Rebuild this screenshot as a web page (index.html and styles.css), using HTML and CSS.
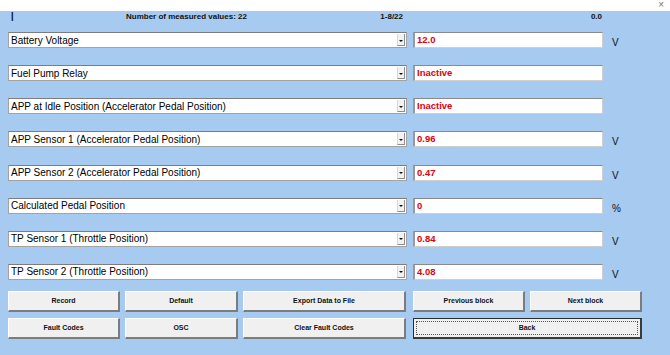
FILE: index.html
```html
<!DOCTYPE html>
<html>
<head>
<meta charset="UTF-8" />
<title>Measured values</title>
<link rel="stylesheet" href="styles.css">
</head>
<body>
<div class="titlebar"><span class="close">&#215;</span></div>

<div class="panel">
	<div class="head">
		<div class="head-left">
			<span class="pipe">|</span>
			<span class="count">Number of measured values: 22</span>
			<span class="page">1-8/22</span>
		</div>
		<div class="head-val">0.0</div>
	</div>

	<div class="rows">
		<div class="row">
			<div class="select"><span class="label">Battery Voltage</span><span class="arrow"><i></i></span></div>
			<div class="value">12.0</div>
			<div class="unit">V</div>
		</div>
		<div class="row">
			<div class="select"><span class="label">Fuel Pump Relay</span><span class="arrow"><i></i></span></div>
			<div class="value">Inactive</div>
			<div class="unit"></div>
		</div>
		<div class="row">
			<div class="select"><span class="label">APP at Idle Position (Accelerator Pedal Position)</span><span class="arrow"><i></i></span></div>
			<div class="value">Inactive</div>
			<div class="unit"></div>
		</div>
		<div class="row">
			<div class="select"><span class="label">APP Sensor 1 (Accelerator Pedal Position)</span><span class="arrow"><i></i></span></div>
			<div class="value">0.96</div>
			<div class="unit">V</div>
		</div>
		<div class="row">
			<div class="select"><span class="label">APP Sensor 2 (Accelerator Pedal Position)</span><span class="arrow"><i></i></span></div>
			<div class="value">0.47</div>
			<div class="unit">V</div>
		</div>
		<div class="row">
			<div class="select"><span class="label">Calculated Pedal Position</span><span class="arrow"><i></i></span></div>
			<div class="value">0</div>
			<div class="unit">%</div>
		</div>
		<div class="row">
			<div class="select"><span class="label">TP Sensor 1 (Throttle Position)</span><span class="arrow"><i></i></span></div>
			<div class="value">0.84</div>
			<div class="unit">V</div>
		</div>
		<div class="row">
			<div class="select"><span class="label">TP Sensor 2 (Throttle Position)</span><span class="arrow"><i></i></span></div>
			<div class="value">4.08</div>
			<div class="unit">V</div>
		</div>
	</div>

	<div class="buttons">
		<div class="btn">Record</div>
		<div class="btn">Default</div>
		<div class="btn">Export Data to File</div>
		<div class="btn push">Previous block</div>
		<div class="btn">Next block</div>
		<div class="btn">Fault Codes</div>
		<div class="btn">OSC</div>
		<div class="btn">Clear Fault Codes</div>
		<div class="btn push back"><span class="focus">Back</span></div>
	</div>
</div>
</body>
</html>
```

FILE: styles.css
```css
body {
	margin: 0;
	background-color: #a6caf0;
	font-family: "Liberation Sans", Arial, sans-serif;
	color: #000;
}

.titlebar {
	height: 11px;
	background-color: white;
	display: flex;
	justify-content: flex-end;
}

.close {
	font-size: 10px;
	line-height: 9px;
	color: #777;
	padding-right: 6px;
}

.panel {
	padding-left: 8px;
}

/* header line */
.head {
	height: 21px;
	display: grid;
	grid-template-columns: 399px 190px;
	column-gap: 6px;
	font-size: 8px;
	font-weight: bold;
	line-height: 11px;
	color: #111;
}

.head-left {
	display: flex;
}

.pipe {
	width: 115px;
	padding-left: 3px;
	font-size: 9px;
	color: #000;
}

.page {
	margin-left: auto;
	padding-right: 4px;
}

.head-val {
	text-align: right;
	padding-right: 1px;
}

/* measured value rows */
.rows {
	display: grid;
	row-gap: 17.15px;
}

.row {
	display: grid;
	grid-template-columns: 399px 190px auto;
	column-gap: 6px;
	height: 16px;
}

.select {
	display: flex;
	align-items: center;
	background: white;
	border: 1px solid #a3a3a3;
	border-top-color: #7d7d7d;
	box-sizing: border-box;
	height: 16px;
}

.label {
	flex: 1;
	font-size: 10px;
	padding-left: 2px;
	white-space: nowrap;
}

.arrow {
	width: 8px;
	height: 12px;
	margin-right: 1px;
	box-sizing: border-box;
	background: #f2f2f2;
	border-left: 1px solid #d8d8d8;
	border-right: 1px solid #8e8e8e;
	border-bottom: 1px solid #8e8e8e;
	display: flex;
	align-items: center;
	justify-content: center;
}

.arrow i {
	width: 0;
	height: 0;
	border-left: 2px solid transparent;
	border-right: 2px solid transparent;
	border-top: 2px solid #111;
	margin-top: 2px;
}

.value {
	background: white;
	border: 1px solid #cfcfcf;
	border-top: 1px solid #8a8a8a;
	border-left: 2px solid #9a9a9a;
	box-sizing: border-box;
	height: 16px;
	color: #e0000e;
	font-size: 9.5px;
	font-weight: bold;
	line-height: 13px;
	padding-left: 2px;
}

.unit {
	font-size: 10px;
	line-height: 10px;
	height: 10px;
	margin-top: 6px;
	padding-left: 3px;
	color: #111;
}

/* buttons */
.buttons {
	margin-top: 11px;
	display: grid;
	grid-template-columns: 112px 113px 163px 114px 112px;
	grid-auto-rows: 21px;
	column-gap: 5px;
	row-gap: 6px;
}

.btn {
	display: flex;
	align-items: center;
	justify-content: center;
	box-sizing: border-box;
	background: #f0f0f0;
	border-top: 1px solid #fdfdfd;
	border-left: 1px solid #fdfdfd;
	border-right: 2px solid #7c7c7c;
	border-bottom: 2px solid #7c7c7c;
	font-size: 7px;
	font-weight: bold;
	color: #111;
}

.push {
	margin-left: 2px;
}

.back {
	grid-column: span 2;
	border: 1px solid #2a2a2a;
	border-right: 2px solid #3a3a3a;
	border-bottom: 2px solid #3a3a3a;
	padding: 2px;
}

.focus {
	flex: 1;
	align-self: stretch;
	display: flex;
	align-items: center;
	justify-content: center;
	border: 1px dotted #555;
}
```
